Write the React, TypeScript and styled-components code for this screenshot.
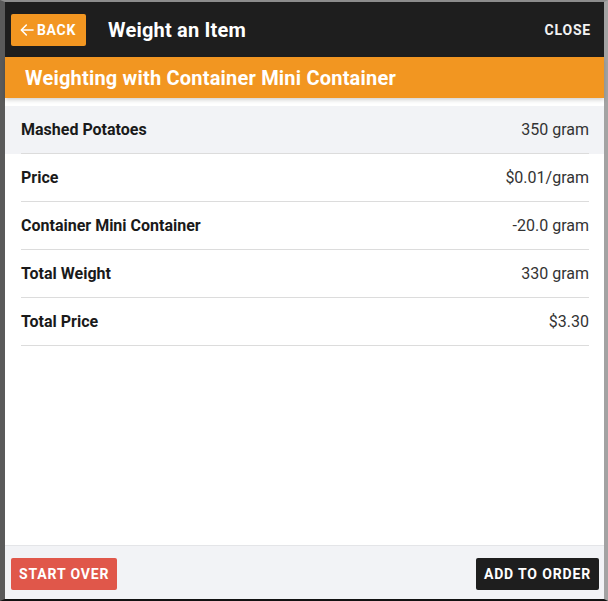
import React from 'react';
import styled, { createGlobalStyle } from 'styled-components';

const GlobalStyle = createGlobalStyle`
  *, *:before, *:after { box-sizing: border-box; }
  body, html { margin: 0; padding: 0; }
  body {
    font-family: Roboto, 'Liberation Sans', sans-serif;
    background: #5e5e5e;
  }
`;

const Backdrop = styled.div`
  width: 608px;
  height: 601px;
  border-top: 2px solid #8c8c8c;
  border-left: 5px solid #5a5a5a;
  border-right: 4px solid #a3a3a3;
  border-bottom: 2px solid #121212;
  display: flex;
`;

const Dialog = styled.div`
  flex: 1;
  display: flex;
  flex-direction: column;
  background: #ffffff;
`;

const Header = styled.div`
  height: 55px;
  flex-shrink: 0;
  background: #1e1e1e;
  display: flex;
  align-items: center;
  padding: 0 13px 0 6px;
  color: #fff;
`;

const BackButton = styled.button`
  width: 75px;
  height: 32px;
  border: none;
  border-radius: 2px;
  background: #f29621;
  color: #fff;
  display: flex;
  align-items: center;
  justify-content: center;
  gap: 2px;
  font-family: inherit;
  font-weight: 700;
  font-size: 14px;
  letter-spacing: 0.7px;
  padding: 0 4px 0 2px;
`;

const Title = styled.h1`
  margin: 0 0 0 22px;
  font-size: 20px;
  font-weight: 700;
  letter-spacing: 0.2px;
  flex: 1;
`;

const CloseButton = styled.button`
  border: none;
  background: none;
  color: #f2f2f2;
  padding: 0;
  font-family: inherit;
  font-weight: 700;
  font-size: 14px;
  letter-spacing: 0.8px;
`;

const Banner = styled.div`
  height: 41px;
  flex-shrink: 0;
  background: #f29621;
  color: #fff;
  display: flex;
  align-items: center;
  padding-left: 20px;
  font-size: 20px;
  font-weight: 700;
  letter-spacing: 0.2px;
  box-shadow: 0 2px 4px rgba(0, 0, 0, 0.18);
  position: relative;
`;

const List = styled.div`
  flex: 1;
  padding-top: 8px;
`;

const Row = styled.div<{ $active?: boolean }>`
  background: ${({ $active }) => ($active ? '#f2f3f6' : 'transparent')};
`;

const RowInner = styled.div`
  margin: 0 15px 0 16px;
  height: 48px;
  border-bottom: 1px solid #dcdcdc;
  display: flex;
  align-items: center;
  justify-content: space-between;
  font-size: 16px;
`;

const Label = styled.span`
  font-weight: 700;
  color: #1a1a1a;
`;

const Value = styled.span`
  color: #333;
`;

const Footer = styled.div`
  height: 54px;
  flex-shrink: 0;
  background: #f2f3f6;
  border-top: 1px solid #e4e5e8;
  display: flex;
  align-items: flex-start;
  justify-content: space-between;
  padding: 12px 5px 0 6px;
`;

const FooterButton = styled.button<{ $tone: 'danger' | 'dark' }>`
  height: 32px;
  border: none;
  border-radius: 2px;
  background: ${({ $tone }) => ($tone === 'danger' ? '#e0574a' : '#1e1e1e')};
  color: #fff;
  font-family: inherit;
  font-weight: 700;
  font-size: 14px;
  letter-spacing: 0.85px;
  padding: 0 8px;
`;

const rows = [
  { label: 'Mashed Potatoes', value: '350 gram' },
  { label: 'Price', value: '$0.01/gram' },
  { label: 'Container Mini Container', value: '-20.0 gram' },
  { label: 'Total Weight', value: '330 gram' },
  { label: 'Total Price', value: '$3.30' },
];

export default function App() {
  return (
    <Backdrop>
      <GlobalStyle />
      <Dialog>
        <Header>
          <BackButton>
            <svg width="16" height="16" viewBox="0 0 24 24" fill="none" stroke="#fff" strokeWidth="2.4" strokeLinecap="round" strokeLinejoin="round">
              <path d="M21 12H4" />
              <path d="M11 4.5L3.5 12l7.5 7.5" />
            </svg>
            BACK
          </BackButton>
          <Title>Weight an Item</Title>
          <CloseButton>CLOSE</CloseButton>
        </Header>
        <Banner>Weighting with Container Mini Container</Banner>
        <List>
          {rows.map((r, i) => (
            <Row key={r.label} $active={i === 0}>
              <RowInner>
                <Label>{r.label}</Label>
                <Value>{r.value}</Value>
              </RowInner>
            </Row>
          ))}
        </List>
        <Footer>
          <FooterButton $tone="danger">START OVER</FooterButton>
          <FooterButton $tone="dark">ADD TO ORDER</FooterButton>
        </Footer>
      </Dialog>
    </Backdrop>
  );
}
